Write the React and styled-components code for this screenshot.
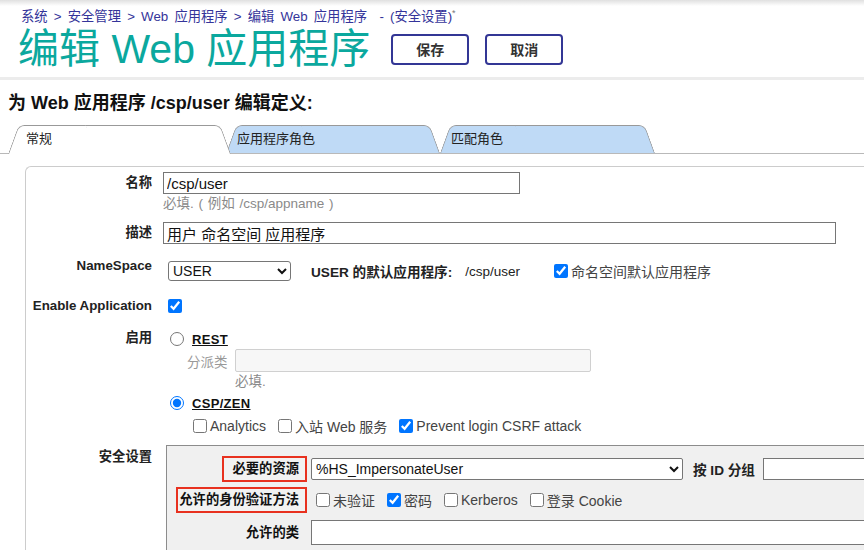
import styled, { createGlobalStyle } from "styled-components";

const Global = createGlobalStyle`
  * { box-sizing: border-box; }
  html, body { margin: 0; background: #fff; overflow: hidden; }
  body {
    font-family: "Liberation Sans", "Noto Sans CJK SC", sans-serif;
    color: #222;
    width: 864px;
    height: 550px;
  }
`;

const Header = styled.header`
  height: 80px;
  padding-top: 5px;
  background: linear-gradient(#e0e0e0, #fff 6px);
  border-bottom: 3px solid #ececec;
`;

const Breadcrumb = styled.div`
  padding-left: 21px;
  font-size: 13.3px;
  line-height: 16px;
  word-spacing: 2.5px;
  color: #34349a;
  white-space: pre;
  sup { font-size: 9px; color: #777; }
`;

const TitleRow = styled.div`
  display: flex;
  align-items: center;
  padding-left: 18px;
  margin-top: 1px;
`;

const Title = styled.h1`
  margin: 0 21px 0 0;
  font-size: 41px;
  line-height: 46px;
  font-weight: normal;
  color: #0ba89e;
`;

const HeadButton = styled.button`
  width: 78px;
  height: 31px;
  margin-right: 16px;
  border: 2px solid #333695;
  border-radius: 4px;
  background: #fff;
  font-family: inherit;
  font-size: 14px;
  font-weight: bold;
  color: #333;
`;

const Heading = styled.h2`
  margin: 0;
  padding: 12px 8px 0;
  font-size: 18px;
  line-height: 22px;
  font-weight: bold;
  color: #111;
`;

const TabBar = styled.div`
  display: flex;
  margin-top: 11px;
  padding-left: 8px;
  height: 29px;
  border-bottom: 1px solid #b9b9b9;
`;

const Tab = styled.div`
  position: relative;
  z-index: ${(p) => (p.$active ? 3 : p.$z)};
  width: ${(p) => p.$w}px;
  height: ${(p) => (p.$active ? 29 : 28)}px;
  margin-left: ${(p) => p.$ml || 0}px;
  padding-left: ${(p) => (p.$active ? 18 : 11)}px;
  font-size: 13px;
  line-height: 28px;
  color: #222;
  &::before, &::after {
    content: "";
    position: absolute;
    top: 0;
    bottom: 0;
    z-index: -1;
    background: ${(p) => (p.$active ? "#fff" : "#bfdaf6")};
    border-top: 1px solid #999;
  }
  &::before {
    left: 0;
    width: 60%;
    border-left: 1px solid #999;
    border-top-left-radius: 6px;
    transform-origin: bottom left;
    transform: skewX(-20deg);
  }
  &::after {
    right: 0;
    width: 60%;
    border-right: 1px solid #999;
    border-top-right-radius: 6px;
    transform-origin: bottom right;
    transform: skewX(20deg);
  }
`;

const FormPanel = styled.div`
  margin: 12px 0 0 25px;
  height: 384px;
  padding-top: 5px;
  border-top: 1px solid #ccc;
  border-left: 1px solid #ccc;
  border-top-left-radius: 6px;
  overflow: hidden;
`;

const Row = styled.div`
  display: grid;
  grid-template-columns: 126px 1fr;
  column-gap: 11px;
  align-items: start;
  margin-top: ${(p) => p.$mt || 0}px;
`;

const Label = styled.div`
  text-align: right;
  font-size: 13.3px;
  font-weight: bold;
  line-height: 16px;
  color: #222;
  margin-top: ${(p) => p.$mt || 0}px;
`;

const TextInput = styled.input`
  display: block;
  flex: ${(p) => (p.$fill ? 1 : "none")};
  width: ${(p) => (p.$fill ? "auto" : `${p.$w}px`)};
  min-width: 0;
  height: ${(p) => p.$h || 22}px;
  padding: 0 3px;
  border: 1px solid ${(p) => (p.disabled ? "#d0d0d0" : "#767676")};
  border-right-width: ${(p) => (p.$fill ? 0 : 1)}px;
  border-radius: ${(p) => (p.disabled ? 2 : 0)}px;
  background: ${(p) => (p.disabled ? "#f7f7f7" : "#fff")};
  font-family: inherit;
  font-size: 15px;
  color: #111;
`;

const Hint = styled.div`
  margin-top: 2px;
  padding-left: ${(p) => p.$pl || 0}px;
  font-size: 13.5px;
  line-height: 16px;
  word-spacing: 1px;
  color: #8a8a8a;
`;

const Inline = styled.div`
  display: flex;
  align-items: center;
  white-space: nowrap;
  height: ${(p) => p.$h || 20}px;
  padding-left: ${(p) => p.$pl || 0}px;
  margin-top: ${(p) => p.$mt || 0}px;
  & > * { flex-shrink: 0; }
`;

const Select = styled.select`
  width: ${(p) => p.$w}px;
  height: ${(p) => p.$h || 20}px;
  margin-left: ${(p) => p.$ml || 0}px;
  border: 1px solid #767676;
  border-radius: ${(p) => p.$r || 3}px;
  background: #fff;
  font-family: inherit;
  font-size: 14px;
  color: #111;
`;

const Strong = styled.span`
  font-size: 13.6px;
  font-weight: bold;
  color: #222;
  margin: ${(p) => p.$m || "0"};
`;

const Plain = styled.span`
  font-size: 13.5px;
  color: #222;
  margin: ${(p) => p.$m || "0"};
`;

const Check = styled.label`
  display: inline-flex;
  align-items: center;
  margin-right: ${(p) => p.$mr ?? 8}px;
  font-size: 14px;
  color: #444;
  input { margin: 0 3px 0 ${(p) => p.$ml || 4}px; width: 14px; height: 14px; }
`;

const Radio = styled.label`
  display: inline-flex;
  align-items: center;
  font-size: 13px;
  font-weight: bold;
  color: #111;
  letter-spacing: 0.3px;
  input { margin: 0 8px 0 7px; width: 14px; height: 14px; }
  span { text-decoration: underline; padding-right: 4px; }
`;

const Muted = styled.span`
  font-size: 13.5px;
  color: #999;
  margin-right: 7px;
`;

const SecPanel = styled.div`
  margin-left: 3px;
  height: 105px;
  padding-top: 10px;
  background: #f0f0f0;
  border-top: 1px solid #8c8c8c;
  border-left: 1px solid #8c8c8c;
`;

const SecRow = styled.div`
  display: grid;
  grid-template-columns: 140px 1fr;
  column-gap: 4px;
  align-items: center;
  height: ${(p) => p.$h}px;
  margin-top: ${(p) => p.$mt || 0}px;
`;

const SecLabel = styled.div`
  justify-self: end;
  white-space: nowrap;
  font-size: 13.3px;
  font-weight: bold;
  line-height: 20px;
  color: #111;
  padding: ${(p) => (p.$boxed ? `1px 6px 1px ${p.$pl}px` : "0 8px 0 0")};
  border: ${(p) => (p.$boxed ? "2px solid #e8311f" : "none")};
  background: ${(p) => (p.$boxed ? "#f2f2f2" : "transparent")};
`;

const FillRow = styled.div`
  display: flex;
  height: ${(p) => p.$h}px;
`;

export default function App() {
  return (
    <>
      <Global />
      <Header>
        <Breadcrumb>
          系统 &gt; 安全管理 &gt; Web 应用程序 &gt; 编辑 Web 应用程序{"  "}- (安全设置)<sup>*</sup>
        </Breadcrumb>
        <TitleRow>
          <Title>编辑 Web 应用程序</Title>
          <HeadButton>保存</HeadButton>
          <HeadButton>取消</HeadButton>
        </TitleRow>
      </Header>

      <Heading>为 Web 应用程序 /csp/user 编辑定义:</Heading>

      <TabBar>
        <Tab $active $w={223}>常规</Tab>
        <Tab $w={214} $ml={-5} $z={2}>应用程序角色</Tab>
        <Tab $w={215} $ml={0} $z={1}>匹配角色</Tab>
      </TabBar>

      <FormPanel>
        <Row>
          <Label $mt={3}>名称</Label>
          <div>
            <TextInput $w={357} defaultValue="/csp/user" />
            <Hint>必填. ( 例如 /csp/appname )</Hint>
          </div>
        </Row>

        <Row $mt={10}>
          <Label $mt={3}>描述</Label>
          <TextInput $w={673} defaultValue="用户 命名空间 应用程序" />
        </Row>

        <Row $mt={17}>
          <Label $mt={-3}>NameSpace</Label>
          <Inline>
            <Select $w={123} $ml={5} defaultValue="USER">
              <option>USER</option>
            </Select>
            <Strong $m="0 13px 0 20px">USER 的默认应用程序:</Strong>
            <Plain $m="0 30px 0 0">/csp/user</Plain>
            <Check $mr={0}>
              <input type="checkbox" defaultChecked />
              命名空间默认应用程序
            </Check>
          </Inline>
        </Row>

        <Row $mt={15}>
          <Label $mt={2}>Enable Application</Label>
          <Inline>
            <Check $ml={5}>
              <input type="checkbox" defaultChecked />
            </Check>
          </Inline>
        </Row>

        <Row $mt={13}>
          <Label $mt={1}>启用</Label>
          <div>
            <Inline>
              <Radio>
                <input type="radio" name="mode" />
                <span>REST</span>
              </Radio>
            </Inline>
            <Inline $h={23} $pl={24}>
              <Muted>分派类</Muted>
              <TextInput $w={356} $h={23} disabled />
            </Inline>
            <Hint $pl={72}>必填.</Hint>
            <Inline $mt={3}>
              <Radio>
                <input type="radio" name="mode" defaultChecked />
                <span>CSP/ZEN</span>
              </Radio>
            </Inline>
            <Inline $mt={3} $pl={26}>
              <Check $ml={4}>
                <input type="checkbox" />
                Analytics
              </Check>
              <Check>
                <input type="checkbox" />
                入站 Web 服务
              </Check>
              <Check>
                <input type="checkbox" defaultChecked />
                Prevent login CSRF attack
              </Check>
            </Inline>
          </div>
        </Row>

        <Row $mt={9}>
          <Label $mt={4}>安全设置</Label>
          <SecPanel>
            <SecRow $h={24}>
              <SecLabel $boxed $pl={9}>必要的资源</SecLabel>
              <Inline $h={24}>
                <Select $w={372} $h={22} $r={2} defaultValue="%HS_ImpersonateUser">
                  <option>%HS_ImpersonateUser</option>
                </Select>
                <Strong $m="0 8px 0 10px">按 ID 分组</Strong>
                <TextInput $fill $h={22} />
              </Inline>
            </SecRow>
            <SecRow $h={26} $mt={7}>
              <SecLabel $boxed $pl={1}>允许的身份验证方法</SecLabel>
              <Inline $h={26}>
                <Check $ml={5}>
                  <input type="checkbox" />
                  未验证
                </Check>
                <Check>
                  <input type="checkbox" defaultChecked />
                  密码
                </Check>
                <Check>
                  <input type="checkbox" />
                  Kerberos
                </Check>
                <Check>
                  <input type="checkbox" />
                  登录 Cookie
                </Check>
              </Inline>
            </SecRow>
            <SecRow $h={25} $mt={7}>
              <SecLabel>允许的类</SecLabel>
              <FillRow $h={25}>
                <TextInput $fill $h={25} />
              </FillRow>
            </SecRow>
          </SecPanel>
        </Row>
      </FormPanel>
    </>
  );
}
